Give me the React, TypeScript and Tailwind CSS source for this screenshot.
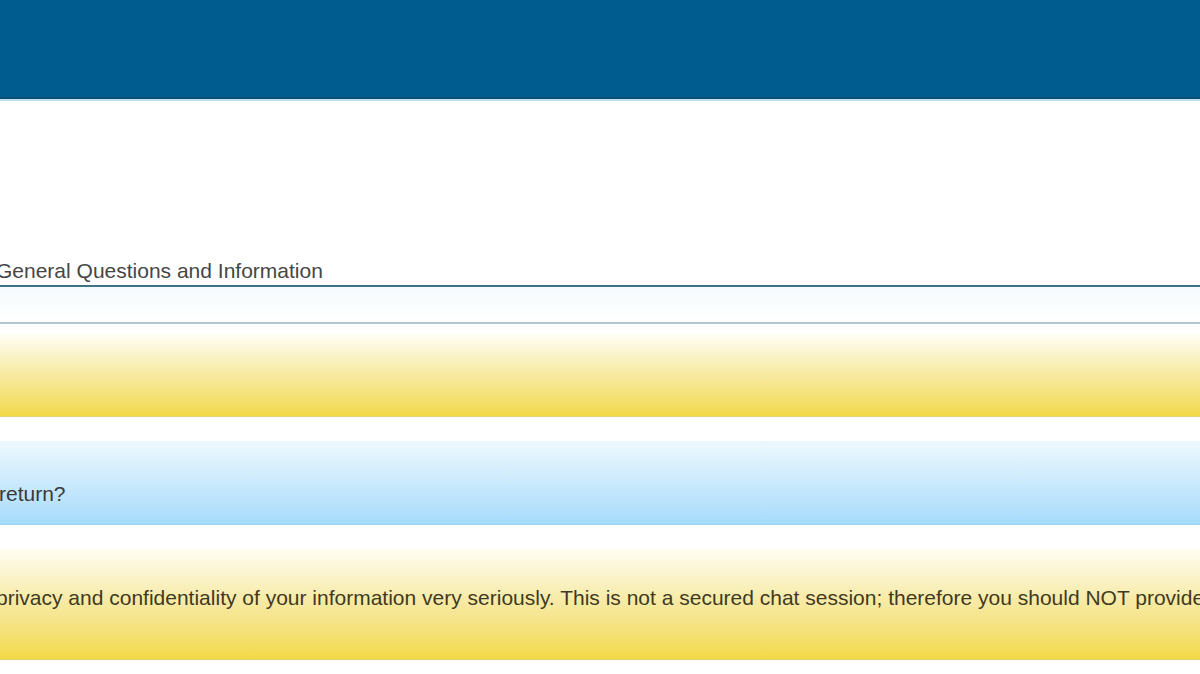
import React from 'react';

export default function App() {
  return (
    <div className="w-[1200px] h-[674px] overflow-hidden bg-white font-['Liberation_Sans',Arial,sans-serif] text-[#3c3c3c]">
      {/* Top banner */}
      <header className="h-[97px] bg-[#005b8f]" />
      <div className="h-[2px] bg-[#0d4c70]" />
      <div className="h-[2px] bg-[#bfe2f3]" />

      {/* Section heading */}
      <div className="pt-[158px]">
        <h2 className="-ml-[4px] text-[21px] leading-[24px] whitespace-nowrap text-[#464646]">
          General Questions and Information
        </h2>
        <div className="mt-[2px] h-[2px] bg-[#3f7283]" />
        <div className="h-[35px] bg-gradient-to-b from-[#f4fbfd] to-white" />
        <div className="h-[2px] bg-[#b3c6cc]" />
      </div>

      {/* Panels */}
      <div className="mt-[9px] flex flex-col">
        <div className="h-[84px] bg-gradient-to-b from-[#fffef6] via-[#f7eaa0] to-[#f2d944] border-b border-[#e8d57a]" />
        <div className="h-[24px]" />
        <div className="h-[84px] flex items-center pt-[22px] bg-gradient-to-b from-[#eef8fe] to-[#a6dbfb] border-b border-[#9cd0ee]">
          <span className="-ml-[1px] text-[21px] whitespace-nowrap text-[#3a3a3a]">return?</span>
        </div>
        <div className="h-[24px]" />
        <div className="h-[111px] flex items-center pb-[12px] bg-gradient-to-b from-[#fffdf2] via-[#f7e9a0] to-[#f2d944] border-b border-[#e3cf6a] overflow-hidden">
          <span className="-ml-[4px] text-[21px] whitespace-nowrap text-[#3f3a22]">
            privacy and confidentiality of your information very seriously. This is not a secured chat session; therefore you should NOT provide
          </span>
        </div>
      </div>
    </div>
  );
}
